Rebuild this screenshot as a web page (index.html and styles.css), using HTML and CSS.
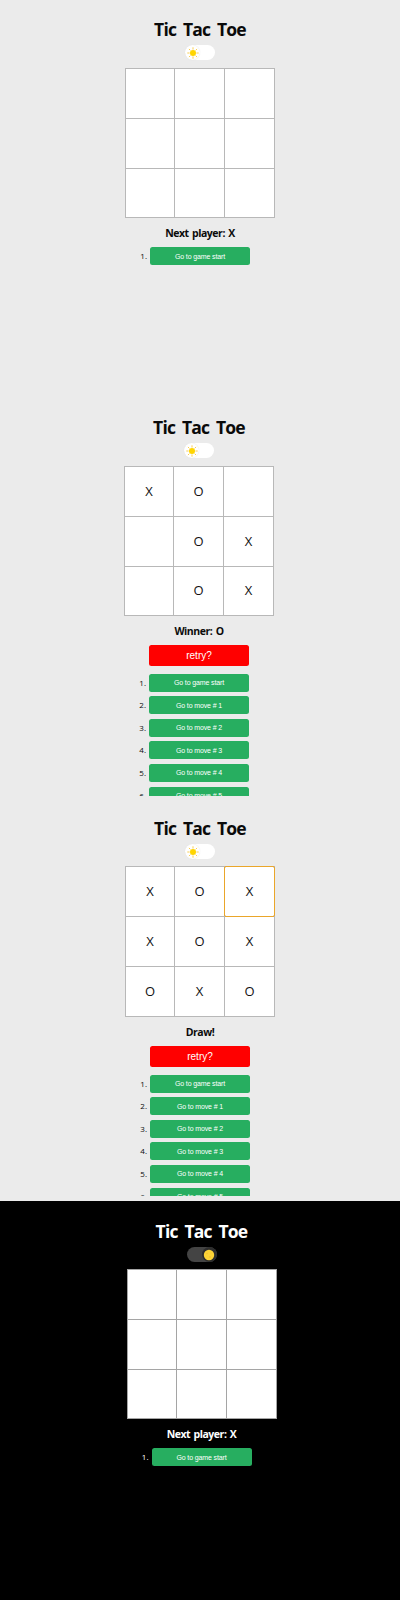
FILE: index.html
```html
<!DOCTYPE html>
<html lang="en">
<head>
<meta charset="utf-8">
<title>Tic Tac Toe</title>
<link rel="stylesheet" href="styles.css">
</head>
<body>
<svg class="defs" width="0" height="0">
  <symbol id="sun" viewBox="0 0 12 12">
    <circle cx="6" cy="6" r="3" fill="#ffd500"/>
    <path d="M6 .7v1.5M6 9.8v1.5M.7 6h1.5M9.8 6h1.5M2.2 2.2l.9.9M8.9 8.9l.9.9M2.2 9.8l.9-.9M8.9 3.1l.9-.9" stroke="#f9ca3e" stroke-width=".9" stroke-linecap="round"/>
  </symbol>
  <symbol id="moon" viewBox="0 0 12 12">
    <circle cx="6" cy="6" r="5.2" fill="#fdd436"/>
    <circle cx="4" cy="4.5" r=".8" fill="#f5c132"/>
    <circle cx="8" cy="4" r=".6" fill="#f5c132"/>
    <circle cx="7" cy="8" r=".9" fill="#f5c132"/>
  </symbol>
</svg>
<main class="screens">
  <section class="screen start">
    <h1 class="title">Tic Tac Toe</h1>
    <div class="toggle"><span class="thumb"><svg><use href="#sun"/></svg></span></div>
    <div class="board"><i></i><i></i><i></i><i></i><i></i><i></i><i></i><i></i><i></i></div>
    <h2 class="status">Next player: X</h2>
    <ol class="moves"><li><button>Go to game start</button></li></ol>
  </section>
  <section class="screen won">
    <h1 class="title">Tic Tac Toe</h1>
    <div class="toggle"><span class="thumb"><svg><use href="#sun"/></svg></span></div>
    <div class="board"><i>X</i><i>O</i><i></i><i></i><i>O</i><i>X</i><i></i><i>O</i><i>X</i></div>
    <h2 class="status">Winner: O</h2>
    <button class="retry">retry?</button>
    <ol class="moves">
      <li><button>Go to game start</button></li>
      <li><button>Go to move # 1</button></li>
      <li><button>Go to move # 2</button></li>
      <li><button>Go to move # 3</button></li>
      <li><button>Go to move # 4</button></li>
      <li><button>Go to move # 5</button></li>
    </ol>
  </section>
  <section class="screen draw">
    <h1 class="title">Tic Tac Toe</h1>
    <div class="toggle"><span class="thumb"><svg><use href="#sun"/></svg></span></div>
    <div class="board"><i>X</i><i>O</i><i class="focused">X</i><i>X</i><i>O</i><i>X</i><i>O</i><i>X</i><i>O</i></div>
    <h2 class="status">Draw!</h2>
    <button class="retry">retry?</button>
    <ol class="moves">
      <li><button>Go to game start</button></li>
      <li><button>Go to move # 1</button></li>
      <li><button>Go to move # 2</button></li>
      <li><button>Go to move # 3</button></li>
      <li><button>Go to move # 4</button></li>
      <li><button>Go to move # 5</button></li>
    </ol>
  </section>
  <section class="screen dark">
    <h1 class="title">Tic Tac Toe</h1>
    <div class="toggle"><span class="thumb"><svg><use href="#moon"/></svg></span></div>
    <div class="board"><i></i><i></i><i></i><i></i><i></i><i></i><i></i><i></i><i></i></div>
    <h2 class="status">Next player: X</h2>
    <ol class="moves"><li><button>Go to game start</button></li></ol>
  </section>
</main>
</body>
</html>
```
FILE: styles.css
```css
* { box-sizing: border-box; }
body { margin: 0; background: #ebebeb; font-family: "Open Sans", "Noto Sans", sans-serif; color: #0a0a0a; }
.defs { display: block; }
.screens { height: 1600px; display: flex; flex-direction: column; }
.screen { display: flex; flex-direction: column; align-items: center; overflow: hidden; flex: none; }
.start { height: 398px; }
.won { height: 398px; padding-right: 2px; }
.draw { height: 397px; margin-top: 3px; }
.dark { height: 399px; margin-top: 5px; padding: 1px 0 0 3px; background: #000; color: #fff; }
.title { margin: 17px 0 4px; height: 24px; line-height: 24px; font-size: 17.5px; font-weight: 700; letter-spacing: -.8px; word-spacing: 3px; white-space: nowrap; }
.toggle { width: 30px; height: 15px; border-radius: 8px; background: #fff; display: flex; flex: none; }
.thumb { width: 15px; height: 15px; border-radius: 50%; display: flex; align-items: center; justify-content: center; box-shadow: 0 0 1px #ddd; }
.thumb svg { width: 12px; height: 12px; display: block; }
.dark .toggle { background: #444; justify-content: flex-end; }
.dark .thumb { background: #2d2d2d; box-shadow: none; }
.board { width: 150px; height: 150px; margin-top: 8px; padding: 1px; display: grid; grid-template: 49px 49px 1fr / 48px 49px 1fr; gap: 1px; background: #b8b8b8; flex: none; }
.draw .board { margin-top: 7px; height: 151px; }
.dark .board { margin-top: 7px; background: #a5a5a5; }
.board i { background: #fff; color: #111; font-style: normal; font-size: 13px; line-height: 16px; padding-bottom: 2px; display: flex; align-items: center; justify-content: center; }
.focused { outline: 1px solid #eaa62a; border-radius: 1px; }
.status { margin: 7px 0 0; height: 16px; line-height: 16px; font-size: 10.5px; font-weight: 700; letter-spacing: -.45px; word-spacing: 1px; white-space: nowrap; }
button { border: 0; padding: 0; margin: 0; display: block; width: 100px; border-radius: 2.5px; font-family: "Liberation Sans", Arial, sans-serif; color: #fff; }
.retry { height: 21px; margin-top: 6px; background: #f00; font-size: 10px; flex: none; }
.moves { list-style: none; counter-reset: move; margin: 6px 0 0; padding: 0; display: flex; flex-direction: column; gap: 4.6px; flex: none; }
.retry + .moves { margin-top: 7.6px; }
.moves li { counter-increment: move; height: 18px; width: 124px; padding-right: 12px; display: flex; align-items: center; justify-content: flex-end; gap: 3px; font-size: 8px; }
.moves li::before { content: counter(move) "."; padding-bottom: 1px; }
.moves button { height: 18px; flex: none; background: #27ae60; font-size: 7px; letter-spacing: -.13px; }
```
